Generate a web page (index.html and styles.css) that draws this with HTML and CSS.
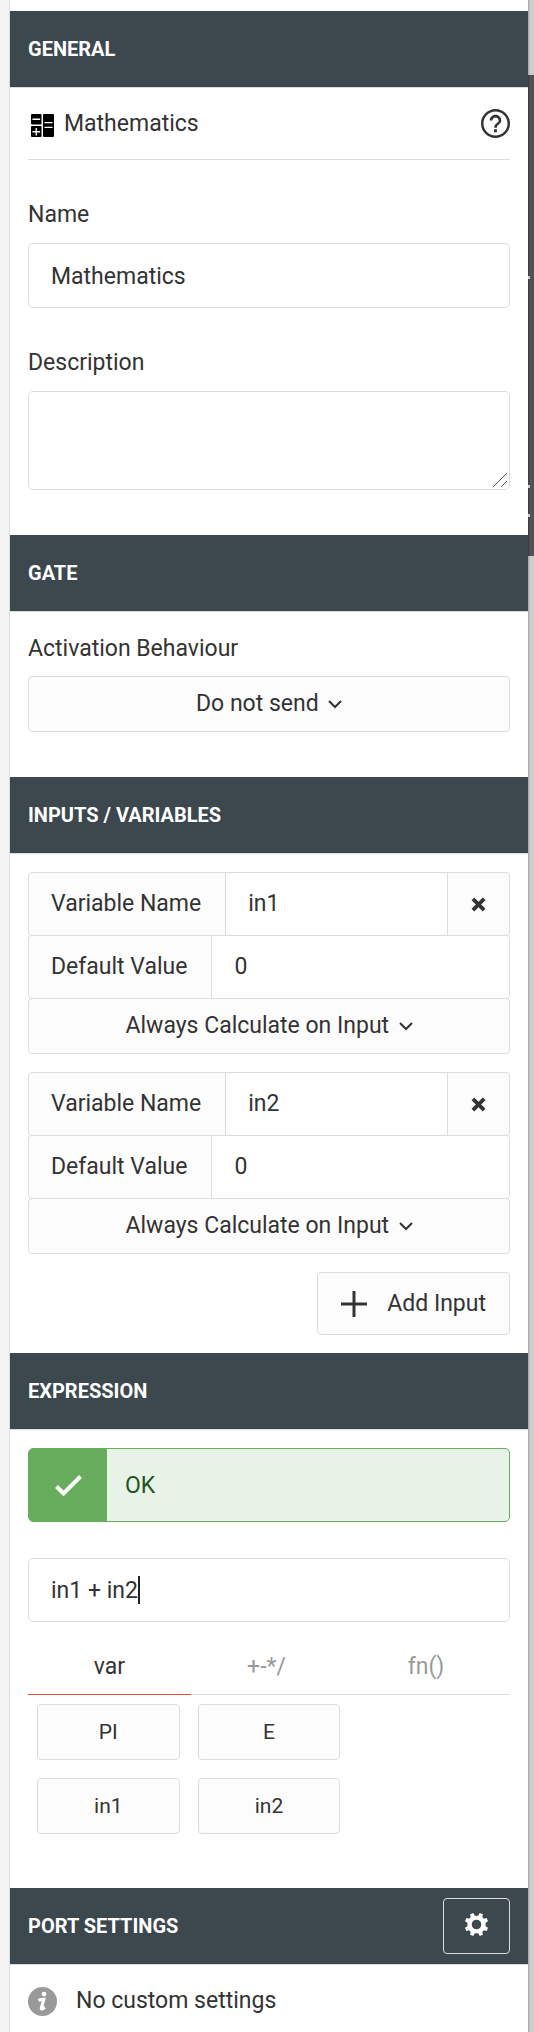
FILE: index.html
```html
<!DOCTYPE html>
<html lang="en">
<head>
    <meta charset="UTF-8">
    <meta name="viewport" content="width=device-width, initial-scale=1.0">
    <title>Mathematics</title>
    <link rel="stylesheet" href="styles.css">
</head>
<body>
    <main class="panel">
        <h2 class="header">General</h2>
        <section class="section general">
            <div class="node-title">
                <svg class="node-icon" viewBox="0 0 24 24">
                    <rect x="0" y="0" width="11" height="11" rx="1"/>
                    <rect x="0" y="12.500" width="11" height="11.500" rx="1"/>
                    <rect x="12.500" y="0" width="11.500" height="24" rx="1"/>
                    <path d="M1.500 5.500h8M1.500 18.500h8M5.500 14.500v8M14 9h8.500M14 14h8.500" stroke="#fff" stroke-width="1.400"/>
                </svg>
                <span>Mathematics</span>
                <button class="help" aria-label="Help">
                    <svg viewBox="2 2 20 20"><path d="M11 18h2v-2h-2v2zm1-16C6.480 2 2 6.480 2 12s4.480 10 10 10 10-4.480 10-10S17.520 2 12 2zm0 18.300c-4.600 0-8.300-3.700-8.300-8.300s3.700-8.300 8.300-8.300 8.300 3.700 8.300 8.300-3.700 8.300-8.300 8.300zm0-14.300c-2.210 0-4 1.790-4 4h1.800c0-1.200 1-2.200 2.200-2.200s2.200 1 2.200 2.200c0 2-3.100 1.750-3.100 5h1.800c0-2.250 3.100-2.500 3.100-5 0-2.210-1.790-4-4-4z"/></svg>
                </button>
            </div>
            <div class="field">
                <label for="name">Name</label>
                <input class="box" id="name" type="text" value="Mathematics">
            </div>
            <div class="field">
                <label for="description">Description</label>
                <div class="wrap">
                    <textarea class="box" id="description"></textarea>
                    <svg class="grip" viewBox="0 0 16 16"><path d="M1 15L15 1M9 15L15 9"/></svg>
                </div>
            </div>
        </section>

        <h2 class="header">Gate</h2>
        <section class="section gate">
            <label for="activation">Activation Behaviour</label>
            <div class="dropdown">
                <select id="activation"><option>Do not send</option></select>
                <svg class="chevron" viewBox="0 0 14 9"><path d="M1 1l6 6 6-6"/></svg>
            </div>
        </section>

        <h2 class="header">Inputs / Variables</h2>
        <section class="section inputs">
            <div class="variable">
                <div class="row">
                    <label for="var1">Variable Name</label>
                    <input id="var1" type="text" value="in1">
                    <button class="remove" aria-label="Remove in1">
                        <svg viewBox="0 0 16 16"><path d="M2 2l12 12M14 2L2 14"/></svg>
                    </button>
                </div>
                <div class="row">
                    <label for="default1">Default Value</label>
                    <input id="default1" type="text" value="0">
                </div>
                <div class="dropdown">
                    <select aria-label="Calculate in1"><option>Always Calculate on Input</option></select>
                    <svg class="chevron" viewBox="0 0 14 9"><path d="M1 1l6 6 6-6"/></svg>
                </div>
            </div>
            <div class="variable">
                <div class="row">
                    <label for="var2">Variable Name</label>
                    <input id="var2" type="text" value="in2">
                    <button class="remove" aria-label="Remove in2">
                        <svg viewBox="0 0 16 16"><path d="M2 2l12 12M14 2L2 14"/></svg>
                    </button>
                </div>
                <div class="row">
                    <label for="default2">Default Value</label>
                    <input id="default2" type="text" value="0">
                </div>
                <div class="dropdown">
                    <select aria-label="Calculate in2"><option>Always Calculate on Input</option></select>
                    <svg class="chevron" viewBox="0 0 14 9"><path d="M1 1l6 6 6-6"/></svg>
                </div>
            </div>
            <button class="add">
                <svg viewBox="0 0 26 26"><path d="M13 0v26M0 13h26"/></svg>
                Add Input
            </button>
        </section>

        <h2 class="header">Expression</h2>
        <section class="section expression">
            <div class="status">
                <div class="status-icon">
                    <svg viewBox="0 0 27 21"><path d="M1.500 11.500l7 7L25.500 1.500"/></svg>
                </div>
                <span class="status-text">OK</span>
            </div>
            <div class="wrap">
                <input class="box" type="text" aria-label="Expression" value="in1 + in2">
                <span class="caret"></span>
            </div>
            <div class="tabs">
                <button class="tab active">var</button>
                <button class="tab operators">+-*/</button>
                <button class="tab functions">fn()</button>
            </div>
            <div class="tokens">
                <button class="token">PI</button>
                <button class="token">E</button>
                <button class="token first">in1</button>
                <button class="token">in2</button>
            </div>
        </section>

        <h2 class="header">
            Port Settings
            <button class="settings" aria-label="Port settings">
                <svg viewBox="0 0 24 24"><path fill-rule="evenodd" d="M10 2.500L12 3L14 2.500L15.300 0L18.700 1.300L18 4.300L19.700 6L22.700 5.300L24 8.700L21.500 10.200V13.800L24 15.300L22.700 18.700L19.700 18L18 19.700L18.700 22.700L15.300 24L14 21.500L12 21L10 21.500L8.700 24L5.300 22.700L6 19.700L4.300 18L1.300 18.700L0 15.300L2.500 13.800V10.200L0 8.700L1.300 5.300L4.300 6L6 4.300L5.300 1.300L8.700 0ZM12 7a5 5 0 1 0 0 10a5 5 0 1 0 0-10Z"/></svg>
            </button>
        </h2>
        <section class="section ports">
            <svg class="info" viewBox="0 0 28 28">
                <circle cx="14" cy="14" r="14"/>
                <circle cx="15.500" cy="6.800" r="2.300" fill="#fff"/>
                <path d="M10 13c2-1 4-1.200 5.300-1.200l-2.500 8.700c-.2 1.200 1 .8 3.500-.8" fill="none" stroke="#fff" stroke-width="3"/>
            </svg>
            <span>No custom settings</span>
        </section>
    </main>
    <div class="canvas">
        <div class="node">
            <span class="mark" style="top: 201px"></span>
            <span class="mark" style="top: 410px"></span>
            <span class="mark" style="top: 439px"></span>
        </div>
    </div>
</body>
</html>
```
FILE: styles.css
```css
*{
    box-sizing: border-box;
}
body{
    display: flex;
    margin: 0;
    padding-left: 9px;
    background-color: #f4f4f4;
    color: #333;
    font-family: Roboto, sans-serif;
    font-size: 23px;
    line-height: 32px;
}
input, textarea, select, button{
    margin: 0;
    font: inherit;
    color: inherit;
}
button{
    cursor: pointer;
}
svg{
    display: block;
}
.panel{
    flex: 1;
    min-width: 0;
    padding-top: 11px;
    border-left: 1px solid #dcdcdc;
    background-color: white;
}
.header{
    display: flex;
    align-items: center;
    justify-content: space-between;
    height: 77px;
    margin: 0;
    padding: 0 18px;
    border-bottom: 1px solid #dcdcdc;
    background-color: #3c474e;
    color: white;
    font-size: 20px;
    font-weight: 700;
    text-transform: uppercase;
}
.section{
    display: flex;
    flex-direction: column;
    padding: 18px;
}
.general{
    gap: 39px;
    padding: 0 18px 45px;
}
.node-title{
    display: flex;
    align-items: center;
    height: 72px;
    border-bottom: 1px solid #dcdcdc;
}
.node-icon{
    width: 23px;
    height: 23px;
    margin: 4px 10px 0 3px;
}
.help{
    width: 29px;
    height: 29px;
    margin-left: auto;
    padding: 0;
    border: none;
    background: none;
    fill: #333;
}
.field{
    display: flex;
    flex-direction: column;
    gap: 12px;
}
.wrap{
    position: relative;
}
.box{
    display: block;
    width: 100%;
    height: 65px;
    padding: 1px 22px 0;
    border: 1px solid #dcdcdc;
    border-radius: 5px;
    outline: none;
    background-color: white;
}
textarea.box{
    height: 99px;
    resize: none;
}
.grip{
    position: absolute;
    right: 2px;
    bottom: 2px;
    width: 16px;
    height: 16px;
    stroke: #555;
    pointer-events: none;
}
.gate{
    gap: 11px;
    padding: 21px 18px 45px;
}
.dropdown{
    display: flex;
    align-items: center;
    justify-content: center;
    gap: 9px;
    height: 56px;
    border: 1px solid #dcdcdc;
    border-radius: 4px;
    background-color: #fcfcfc;
}
.dropdown select{
    appearance: none;
    padding: 0;
    border: none;
    outline: none;
    background: none;
}
.chevron{
    width: 14px;
    height: 9px;
    fill: none;
    stroke: #333;
    stroke-width: 2;
}
.inputs{
    gap: 18px;
}
.row{
    display: flex;
    height: 64px;
    margin-bottom: -1px;
    border: 1px solid #dcdcdc;
    border-radius: 4px;
    background-color: #fcfcfc;
}
.row label{
    padding: 15px 24px 15px 22px;
}
.row input{
    flex: 1;
    min-width: 0;
    padding: 0 22px;
    border: none;
    border-left: 1px solid #dcdcdc;
    border-radius: 0 4px 4px 0;
    outline: none;
    background-color: white;
}
.remove{
    width: 62px;
    padding: 0 23px;
    border: none;
    border-left: 1px solid #dcdcdc;
    background: none;
    stroke: #333;
    stroke-width: 4;
}
.add{
    display: flex;
    align-items: center;
    align-self: flex-end;
    gap: 20px;
    height: 63px;
    padding: 0 23px;
    border: 1px solid #dcdcdc;
    border-radius: 4px;
    background-color: #fcfcfc;
}
.add svg{
    width: 26px;
    height: 26px;
    stroke: #333;
    stroke-width: 3;
}
.status{
    display: flex;
    height: 74px;
    margin-bottom: 36px;
    overflow: hidden;
    border: 1px solid #68ad5d;
    border-radius: 5px;
    background-color: #e8f3e7;
    color: #2a5223;
}
.status-icon{
    display: flex;
    align-items: center;
    justify-content: center;
    width: 78px;
    background-color: #68ad5d;
}
.status-icon svg{
    width: 27px;
    height: 21px;
    fill: none;
    stroke: white;
    stroke-width: 4;
}
.status-text{
    padding: 21px 18px;
}
.expression .box{
    height: 64px;
}
.caret{
    position: absolute;
    top: 18px;
    left: 110px;
    width: 2px;
    height: 28px;
    background-color: #222;
    pointer-events: none;
}
.tabs{
    display: flex;
    margin-top: 9px;
}
.tab{
    flex: 163;
    height: 64px;
    padding: 8px 0 0;
    border: none;
    border-bottom: 1px solid #dcdcdc;
    background: none;
    color: #999;
}
.tab.operators{
    flex: 151;
}
.tab.functions{
    flex: 168;
}
.tab.active{
    border-color: #e74c3c;
    color: #333;
}
.tokens{
    display: grid;
    grid-template-columns: 1fr 1fr 1fr;
    gap: 18px;
    padding: 9px 9px 36px;
}
.token{
    height: 56px;
    padding: 0;
    border: 1px solid #dcdcdc;
    border-radius: 4px;
    background-color: #fcfcfc;
    font-size: 21px;
}
.token.first{
    grid-column: 1;
}
.settings{
    width: 67px;
    height: 56px;
    padding: 0 21px 4px;
    border: 1px solid #dcdcdc;
    border-radius: 4px;
    background: none;
    fill: white;
}
.ports{
    flex-direction: row;
    align-items: center;
    gap: 19px;
    padding-top: 20px;
}
.info{
    width: 29px;
    height: 29px;
    fill: #999;
}
.canvas{
    width: 6px;
    padding-top: 75px;
    background: linear-gradient(to right, #a0a0a0, #cdcdcd 2px);
}
.node{
    position: relative;
    height: 481px;
    background: linear-gradient(to right, #3a3a3c, #525155 2px);
}
.mark{
    position: absolute;
    left: 0;
    width: 2px;
    height: 3px;
    background-color: #ccc;
}
```
